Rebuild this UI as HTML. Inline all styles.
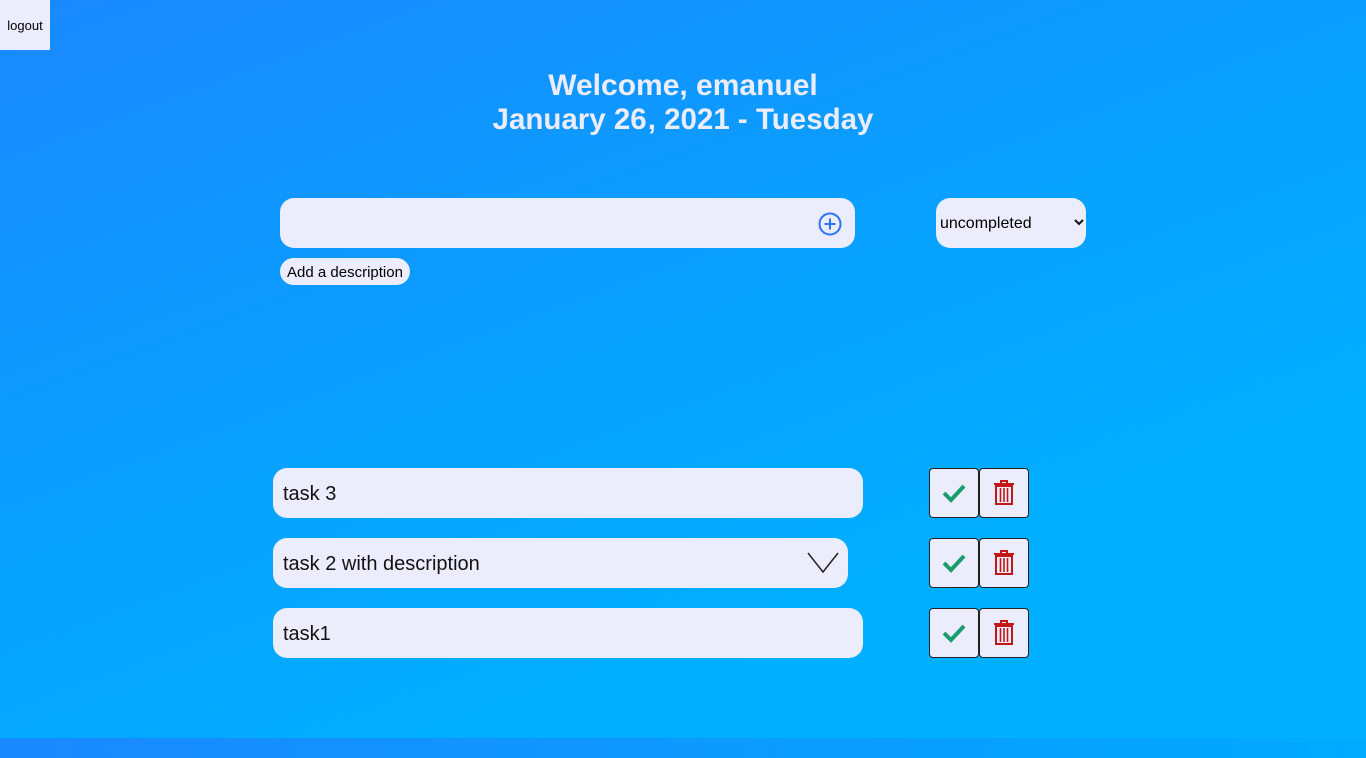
<!DOCTYPE html>
<html><head><meta charset="utf-8">
<style>
html,body{margin:0;padding:0;width:1366px;height:758px;overflow:hidden;font-family:"Liberation Sans",Arial,sans-serif}
body{background:linear-gradient(160deg,#1a88ff 0%,#0a9fff 40%,#00afff 75%,#00b0ff 100%);position:relative}
.strip{position:absolute;left:0;top:738px;width:1366px;height:20px;background:linear-gradient(90deg,#1a88ff,#00aaff)}
.logout{position:absolute;left:0;top:0;width:50px;height:50px;background:#ebedfc;font-size:13px;color:#000;display:flex;align-items:center;justify-content:center}
h1{position:absolute;top:69px;left:0;width:1366px;margin:0;text-align:center;color:#ebedfc;font-size:30px;line-height:34px;font-weight:bold}
.box{position:absolute;background:#ebedfc;border-radius:14px}
.task{font-size:20px;color:#111;display:flex;align-items:center;padding-left:10px;padding-top:2px;box-sizing:border-box}
.btn{position:absolute;width:48px;height:48px;background:#ebedfc;border:1px solid #222;border-radius:4px;display:flex;align-items:center;justify-content:center}
</style></head><body>
<div class="logout">logout</div>
<h1>Welcome, emanuel<br><span style="font-size:29.5px">January 26<span style="margin-left:1px">,</span> 2021 - Tuesday</span></h1>
<div class="box" style="left:280px;top:198px;width:575px;height:50px"></div>
<svg style="position:absolute;left:817px;top:211px" width="26" height="26" viewBox="0 0 26 26"><circle cx="13" cy="13" r="10.5" fill="none" stroke="#2a72ff" stroke-width="2"/><path d="M13 7.5v11M7.5 13h11" stroke="#2a72ff" stroke-width="2"/></svg>
<div class="box" style="left:936px;top:198px;width:150px;height:50px;display:flex;align-items:center;font-size:16px;color:#000;padding-left:4px;padding-top:2px;box-sizing:border-box">uncompleted
<svg style="position:absolute;left:138px;top:20px" width="10" height="8" viewBox="0 0 10 8"><path d="M1 2l4 4 4-4" stroke="#111" stroke-width="2" fill="none"/></svg></div>
<div class="box" style="left:280px;top:258px;width:130px;height:27px;display:flex;align-items:center;justify-content:center;font-size:15px;color:#000;padding-top:2px;box-sizing:border-box">Add a description</div>

<div class="box task" style="left:273px;top:468px;width:590px;height:50px">task 3</div>
<div class="box task" style="left:273px;top:538px;width:575px;height:50px">task 2 with description</div>
<svg style="position:absolute;left:807px;top:552px" width="32" height="22" viewBox="0 0 32 22"><path d="M1 1l15 19L31 1" stroke="#222" stroke-width="1.5" fill="none"/></svg>
<div class="box task" style="left:273px;top:608px;width:590px;height:50px">task1</div>

<div class="btn" style="left:929px;top:468px"><svg width="26" height="22" viewBox="0 0 26 22"><path d="M3 11l7 7L23 4" stroke="#1a9e6e" stroke-width="4" fill="none"/></svg></div>
<div class="btn" style="left:979px;top:468px"><svg width="22" height="26" viewBox="0 0 22 26"><path d="M1 4h20M8 4V1h6v3" stroke="#c01818" stroke-width="2" fill="none"/><rect x="3" y="6" width="16" height="18" fill="none" stroke="#c01818" stroke-width="2"/><path d="M7.5 8v14M11 8v14M14.5 8v14" stroke="#c01818" stroke-width="1.6"/></svg></div>
<div class="btn" style="left:929px;top:538px"><svg width="26" height="22" viewBox="0 0 26 22"><path d="M3 11l7 7L23 4" stroke="#1a9e6e" stroke-width="4" fill="none"/></svg></div>
<div class="btn" style="left:979px;top:538px"><svg width="22" height="26" viewBox="0 0 22 26"><path d="M1 4h20M8 4V1h6v3" stroke="#c01818" stroke-width="2" fill="none"/><rect x="3" y="6" width="16" height="18" fill="none" stroke="#c01818" stroke-width="2"/><path d="M7.5 8v14M11 8v14M14.5 8v14" stroke="#c01818" stroke-width="1.6"/></svg></div>
<div class="btn" style="left:929px;top:608px"><svg width="26" height="22" viewBox="0 0 26 22"><path d="M3 11l7 7L23 4" stroke="#1a9e6e" stroke-width="4" fill="none"/></svg></div>
<div class="btn" style="left:979px;top:608px"><svg width="22" height="26" viewBox="0 0 22 26"><path d="M1 4h20M8 4V1h6v3" stroke="#c01818" stroke-width="2" fill="none"/><rect x="3" y="6" width="16" height="18" fill="none" stroke="#c01818" stroke-width="2"/><path d="M7.5 8v14M11 8v14M14.5 8v14" stroke="#c01818" stroke-width="1.6"/></svg></div>
<div class="strip"></div>
</body></html>
